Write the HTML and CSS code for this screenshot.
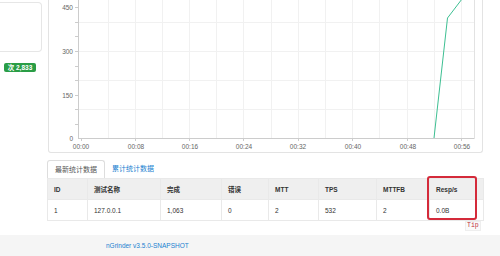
FILE: index.html
```html
<!DOCTYPE html>
<html lang="en">
<head>
  <meta charset="UTF-8">
  <title>nGrinder Report</title>
  <link rel="stylesheet" href="styles.css">
</head>
<body>
  <div class="page">
    <aside class="side">
      <div class="side-panel"></div>
      <span class="badge">次 2,833</span>
    </aside>

    <main class="content">
      <div class="chart-box">
        <svg class="chart" width="435" height="153" viewBox="48 0 435 153">
          <!-- grid -->
          <g stroke="#f1f1f1" stroke-width="1">
            <line x1="78" y1="22.5" x2="474" y2="22.5"/>
            <line x1="78" y1="51.5" x2="474" y2="51.5"/>
            <line x1="78" y1="80.5" x2="474" y2="80.5"/>
            <line x1="78" y1="109.5" x2="474" y2="109.5"/>
            <line x1="108.5" y1="0" x2="108.5" y2="138"/>
            <line x1="135.5" y1="0" x2="135.5" y2="138"/>
            <line x1="162.5" y1="0" x2="162.5" y2="138"/>
            <line x1="189.5" y1="0" x2="189.5" y2="138"/>
            <line x1="216.5" y1="0" x2="216.5" y2="138"/>
            <line x1="243.5" y1="0" x2="243.5" y2="138"/>
            <line x1="271.5" y1="0" x2="271.5" y2="138"/>
            <line x1="298.5" y1="0" x2="298.5" y2="138"/>
            <line x1="325.5" y1="0" x2="325.5" y2="138"/>
            <line x1="352.5" y1="0" x2="352.5" y2="138"/>
            <line x1="379.5" y1="0" x2="379.5" y2="138"/>
            <line x1="407.5" y1="0" x2="407.5" y2="138"/>
            <line x1="434.5" y1="0" x2="434.5" y2="138"/>
            <line x1="461.5" y1="0" x2="461.5" y2="138"/>
          </g>
          <line x1="474.5" y1="0" x2="474.5" y2="139" stroke="#e2e2e2"/>

          <!-- axes -->
          <g stroke="#cccccc" stroke-width="1">
            <line x1="78.5" y1="0" x2="78.5" y2="138.5"/>
            <line x1="78" y1="138.5" x2="474" y2="138.5"/>
            <line x1="75" y1="7.5" x2="78" y2="7.5"/>
            <line x1="75" y1="22.5" x2="78" y2="22.5"/>
            <line x1="75" y1="36.5" x2="78" y2="36.5"/>
            <line x1="75" y1="51.5" x2="78" y2="51.5"/>
            <line x1="75" y1="66.5" x2="78" y2="66.5"/>
            <line x1="75" y1="80.5" x2="78" y2="80.5"/>
            <line x1="75" y1="95.5" x2="78" y2="95.5"/>
            <line x1="75" y1="109.5" x2="78" y2="109.5"/>
            <line x1="75" y1="124.5" x2="78" y2="124.5"/>
            <line x1="81.5" y1="138" x2="81.5" y2="141"/>
            <line x1="135.5" y1="138" x2="135.5" y2="141"/>
            <line x1="189.5" y1="138" x2="189.5" y2="141"/>
            <line x1="243.5" y1="138" x2="243.5" y2="141"/>
            <line x1="298.5" y1="138" x2="298.5" y2="141"/>
            <line x1="352.5" y1="138" x2="352.5" y2="141"/>
            <line x1="407.5" y1="138" x2="407.5" y2="141"/>
            <line x1="461.5" y1="138" x2="461.5" y2="141"/>
          </g>

          <g class="ylabels" text-anchor="end">
            <text x="73" y="9.5">450</text>
            <text x="73" y="53.5">300</text>
            <text x="73" y="97.5">150</text>
            <text x="73" y="140.5">0</text>
          </g>
          <g class="xlabels" text-anchor="middle">
            <text x="81" y="148.5">00:00</text>
            <text x="136" y="148.5">00:08</text>
            <text x="190" y="148.5">00:16</text>
            <text x="244" y="148.5">00:24</text>
            <text x="298" y="148.5">00:32</text>
            <text x="353" y="148.5">00:40</text>
            <text x="408" y="148.5">00:48</text>
            <text x="462" y="148.5">00:56</text>
          </g>

          <!-- data -->
          <polyline points="434,138 447.5,18 462,-1" fill="none" stroke="#3dbf92" stroke-width="1"/>
        </svg>
      </div>

      <ul class="tabs">
        <li class="tab active">最新统计数据</li>
        <li class="tab">累计统计数据</li>
      </ul>

      <div class="table-wrap">
        <table class="stats">
          <thead>
            <tr>
              <th class="c-id">ID</th>
              <th class="c-name">测试名称</th>
              <th class="c-done">完成</th>
              <th class="c-err">错误</th>
              <th class="c-mtt">MTT</th>
              <th class="c-tps">TPS</th>
              <th class="c-mttfb">MTTFB</th>
              <th class="c-resp">Resp/s</th>
            </tr>
          </thead>
          <tbody>
            <tr>
              <td>1</td>
              <td>127.0.0.1</td>
              <td>1,063</td>
              <td>0</td>
              <td>2</td>
              <td>532</td>
              <td>2</td>
              <td>0.0B</td>
            </tr>
          </tbody>
        </table>
        <div class="highlight"></div>
        <span class="tip">Tip</span>
      </div>
    </main>
  </div>

  <footer class="footer">
    <a href="#">nGrinder v3.5.0-SNAPSHOT</a>
  </footer>
</body>
</html>
```

FILE: styles.css
```css
body {
  margin: 0;
  padding: 0;
  background-color: #fff;
  color: #333;
  font-family: "Liberation Sans", Arial, "Noto Sans CJK SC", sans-serif;
  width: 500px;
  height: 256px;
  overflow: hidden;
}

.page {
  display: flex;
  height: 235px;
}

.side {
  width: 47px;
  flex: none;
  display: flex;
  flex-direction: column;
  align-items: flex-start;
}

.side-panel {
  margin-top: 2px;
  width: 42px;
  height: 50px;
  box-sizing: border-box;
  border: 1px solid #e6e6e6;
  border-left: none;
  border-radius: 0 4px 4px 0;
}

.badge {
  margin: 11px 0 0 4px;
  background-color: #2a9d46;
  color: white;
  font-size: 6.5px;
  font-weight: bold;
  line-height: 9px;
  padding: 0 2px;
  border-radius: 2px;
  width: 28px;
  text-align: center;
}

.content {
  width: 437px;
}

.chart-box {
  margin-left: 1px;
  width: 435px;
  height: 153px;
  box-sizing: border-box;
  border: 1px solid #e3e3e3;
  border-top: none;
  border-radius: 0 0 3px 3px;
  overflow: hidden;
}

.chart {
  display: block;
  margin: 0 -1px;
}

.chart text {
  font-family: "Liberation Sans", Arial, sans-serif;
  font-size: 6.5px;
  fill: #666;
}

.tabs {
  list-style: none;
  margin: 7px 0 0 0;
  padding: 0;
  display: flex;
  height: 18px;
}

.tab {
  font-size: 7px;
  line-height: 17px;
  padding: 0 7px;
  color: #1a7fd0;
}

.tab.active {
  color: #555;
  border: 1px solid #ddd;
  border-bottom: none;
  border-radius: 3px 3px 0 0;
  background: white;
}

.table-wrap {
  position: relative;
}

.stats {
  width: 436px;
  border-collapse: collapse;
  table-layout: fixed;
  font-size: 6.5px;
}

.stats th,
.stats td {
  text-align: left;
  padding: 0 6px;
  height: 21px;
  box-sizing: border-box;
  border: 1px solid #e9e9e9;
}

.stats th {
  background-color: #efefef;
  font-weight: bold;
  color: #333;
}

.stats td {
  color: #333;
}

.c-id { width: 40px; }
.c-name { width: 73px; }
.c-done { width: 61px; }
.c-err { width: 47px; }
.c-mtt { width: 50px; }
.c-tps { width: 58px; }
.c-mttfb { width: 53px; }
.c-resp { width: 54px; }

.highlight {
  position: absolute;
  left: 380px;
  top: -2px;
  width: 50px;
  height: 44px;
  box-sizing: border-box;
  border: 2px solid #d42a3a;
  border-radius: 3px;
}

.tip {
  position: absolute;
  left: 418px;
  top: 43px;
  font-family: "Liberation Mono", "Courier New", monospace;
  font-size: 6.5px;
  line-height: 8px;
  color: #c0303f;
  background: #fafafa;
  border: 1px solid #eeeeee;
  padding: 0 1px;
}

.footer {
  height: 21px;
  background-color: #f5f5f5;
  padding-left: 106px;
  font-size: 6.5px;
  line-height: 21px;
}

.footer a {
  color: #1a7fd0;
  text-decoration: none;
}
```
